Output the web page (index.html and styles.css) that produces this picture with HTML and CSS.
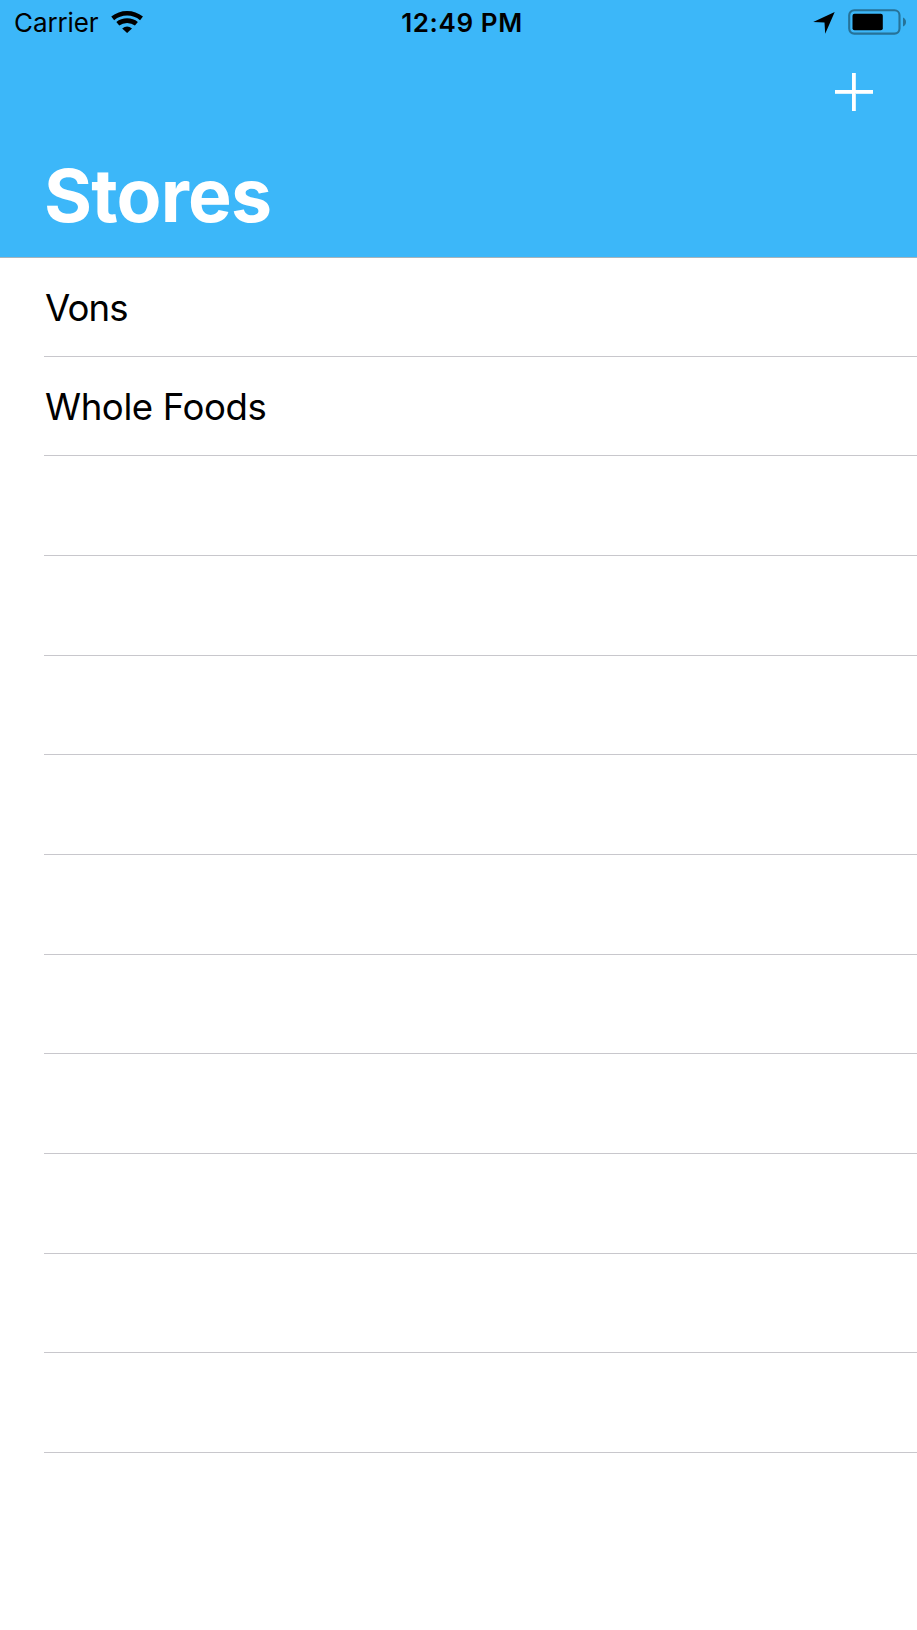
FILE: index.html
```html
<!DOCTYPE html>
<html lang="en">
<head>
<meta charset="utf-8">
<title>Stores</title>
<link rel="stylesheet" href="styles.css">
</head>
<body>
<header class="header">
  <div class="status">
    <div class="status-left">
      <span class="carrier">Carrier</span>
      <svg class="wifi" width="32" height="22" viewBox="0 0 32 22">
        <g fill="none" stroke="#000" stroke-width="4.6">
          <path d="M1.7 7.4Q8 2.3 16.1 2.3Q24.2 2.3 30.5 7.4"/>
          <path d="M6.8 12.8Q10.7 9.6 16.1 9.6Q21.5 9.6 25.4 12.8"/>
        </g>
        <path d="M11.2 17.4Q16.1 13.6 21 17.4L16.1 22Z"/>
      </svg>
    </div>
    <span class="time">12:49 PM</span>
    <div class="status-right">
      <svg class="location" width="22" height="22" viewBox="0 0 22 22"><path d="M21.7.1L12.2 21.8L11.5 10.6L.2 9.9Z"/></svg>
      <svg class="battery" width="59" height="26" viewBox="0 0 59 26">
        <rect x="1.2" y="1.2" width="50.3" height="23.4" rx="5" fill="none" stroke="#267298" stroke-width="2.1"/>
        <rect x="4.5" y="4.8" width="30.3" height="16.4" rx="2"/>
        <path d="M55 8.5Q58 10 58 13Q58 16 55 17.5Z" fill="#267298"/>
      </svg>
    </div>
  </div>
  <div class="toolbar">
    <svg class="add" width="38" height="38" viewBox="0 0 38 38" role="img" aria-label="Add"><path d="M0 17H38V20H0ZM17 0H20V38H17Z" fill="#fff"/><path d="M0 20H38V21H0ZM20 0H21V38H20Z" fill="#fff" opacity=".8"/></svg>
  </div>
  <h1 class="title">Stores</h1>
</header>
<ul class="list">
  <li class="row row-short">Vons</li>
  <li class="row">Whole Foods</li>
  <li class="row"></li>
  <li class="row"></li>
  <li class="row"></li>
  <li class="row"></li>
  <li class="row"></li>
  <li class="row"></li>
  <li class="row"></li>
  <li class="row"></li>
  <li class="row"></li>
  <li class="row"></li>
</ul>
</body>
</html>
```
FILE: styles.css
```css
* { box-sizing: border-box; }
body { margin: 0; min-height: 1630px; background: #fff; color: #000; font-family: Inter, "Liberation Sans", sans-serif; }
svg { display: block; flex: none; }
.header { height: 258px; background: #3cb7f9; border-bottom: 1px solid #a6b4bc; }
.status { display: grid; grid-template-columns: 1fr auto 1fr; height: 46px; padding: 0 10px 0 14px; }
.status-left { display: flex; }
.carrier { width: 97px; font-size: 26px; line-height: 46px; letter-spacing: -.1px; }
.wifi { margin-top: 11px; }
.time { padding-left: 3px; font-size: 26px; font-weight: 600; line-height: 46px; letter-spacing: .6px; }
.status-right { display: flex; justify-content: flex-end; gap: 13px; }
.location { margin-top: 12px; }
.battery { margin-top: 9px; }
.toolbar { display: flex; justify-content: flex-end; height: 92px; padding: 27px 44px 0 0; }
.title { margin: 0; padding-left: 44px; color: #fff; font-size: 73.4px; font-weight: 700; line-height: 116px; letter-spacing: -.8px; }
.list { margin: -1px 0 0 44px; padding: 0; list-style: none; }
.row { height: 99.667px; padding-left: 1px; border-bottom: 1px solid #c8c7cc; font-size: 36.6px; line-height: 101px; letter-spacing: -.4px; }
.row-short { line-height: 102px; letter-spacing: -.9px; }
```
